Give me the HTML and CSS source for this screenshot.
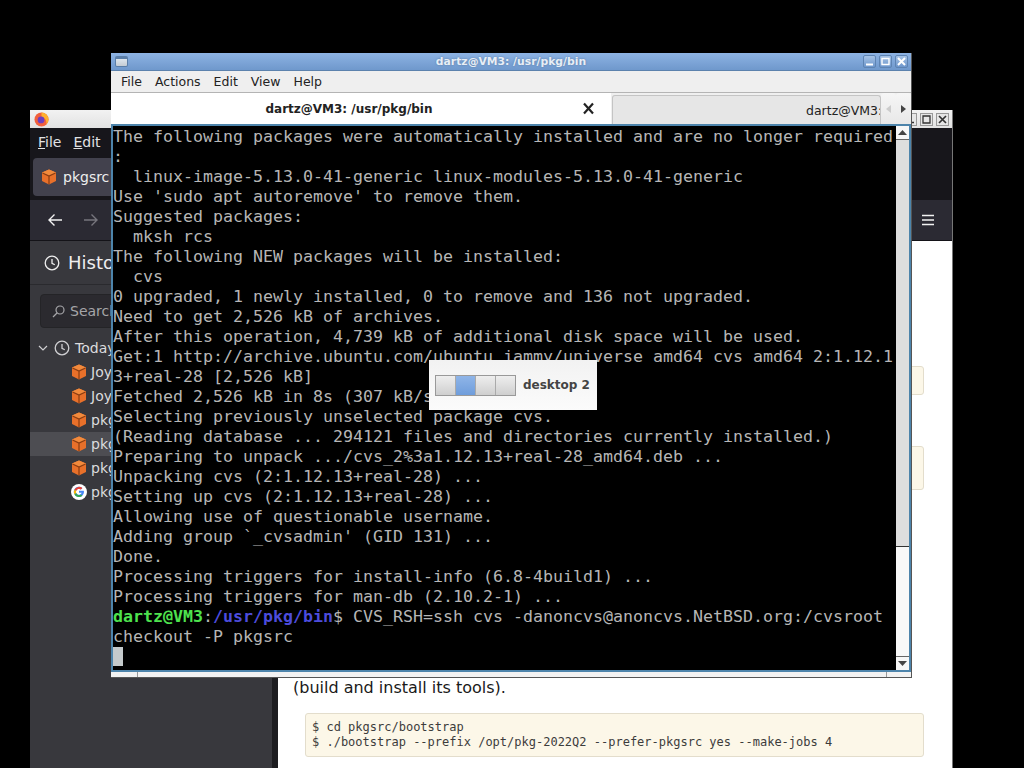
FILE: index.html
```html
<!DOCTYPE html>
<html lang="en">
<head>
<meta charset="utf-8">
<title>dartz@VM3: /usr/pkg/bin</title>
<link rel="stylesheet" href="styles.css">
</head>
<body>
<svg class="defs" width="0" height="0" aria-hidden="true">
  <symbol id="pkg" viewBox="0 0 16 16">
    <path d="M8 .5 15 3.5V12L8 15.5 1 12V3.5Z" fill="#e8702a"/>
    <path d="M8 .5 15 3.500 8 6.800 1 3.500Z" fill="#f28a3c"/>
    <path d="M1.500 4 8 7l6.500-3M8 7v8" fill="none" stroke="#8a3d12" stroke-width="1.200"/>
  </symbol>
  <symbol id="clock" viewBox="0 0 16 16">
    <circle cx="8" cy="8" r="6.800" fill="none" stroke="currentColor" stroke-width="1.300"/>
    <path d="M8 4v4.300l2.800 1.500" fill="none" stroke="currentColor" stroke-width="1.300"/>
  </symbol>
  <symbol id="goog" viewBox="0 0 16 16">
    <circle cx="8" cy="8" r="8" fill="#fff"/>
    <path d="M12.800 6.700H8v2h2.700A3 3 0 1 1 9.900 5.600l1.500-1.500A5.100 5.100 0 1 0 13 8z" fill="#4285f4"/>
    <path d="M3.500 5.600 5.200 6.900A3 3 0 0 1 9.900 5.600l1.500-1.500A5.100 5.100 0 0 0 3.500 5.600z" fill="#ea4335"/>
    <path d="M3.500 5.600a5.100 5.100 0 0 0 0 4.800L5.200 9.100a3 3 0 0 1 0-2.200z" fill="#fbbc05"/>
    <path d="M3.500 10.400A5.100 5.100 0 0 0 11.500 11.700L9.900 10.400A3 3 0 0 1 5.200 9.100z" fill="#34a853"/>
  </symbol>
</svg>

<main class="desktop">
  <section class="browser">
    <header class="b-title">
      <svg class="fx" width="15" height="15" viewBox="0 0 16 16" aria-hidden="true">
        <circle cx="8" cy="8" r="7.500" fill="#f2603c"/>
        <path d="M8 .5a7.500 7.500 0 0 1 7.500 7.500c0 2-1 4-2.500 5 1-3-1-7-5-8z" fill="#ffb02e"/>
        <circle cx="7.500" cy="8.500" r="3.600" fill="#6d3fc0"/>
      </svg>
      <div class="b-controls">
        <span class="b-btn"><svg width="9" height="9" viewBox="0 0 9 9"><path d="M1 7.500h7" stroke="#333" stroke-width="1.500"/></svg></span>
        <span class="b-btn"><svg width="9" height="9" viewBox="0 0 9 9"><path d="M1 1h7v7H1z" fill="none" stroke="#333" stroke-width="1.300"/></svg></span>
        <span class="b-btn"><svg width="9" height="9" viewBox="0 0 9 9"><path d="M1 1l7 7M8 1 1 8" stroke="#333" stroke-width="1.700"/></svg></span>
      </div>
    </header>
    <nav class="b-menu"><span><u>F</u>ile</span><span><u>E</u>dit</span></nav>
    <div class="b-tabs">
      <div class="b-tab"><svg width="16" height="16"><use href="#pkg"/></svg><span>pkgsrc</span></div>
    </div>
    <div class="b-nav">
      <svg class="nav-back" width="16" height="16" viewBox="0 0 16 16"><path d="M15 8H2M7.500 2.500 2 8l5.500 5.500" fill="none" stroke="#f2f2f2" stroke-width="1.400"/></svg>
      <svg class="nav-fwd" width="16" height="16" viewBox="0 0 16 16"><path d="M1 8h13M8.500 2.500 14 8l-5.500 5.500" fill="none" stroke="#77767d" stroke-width="1.400"/></svg>
      <svg class="nav-menu" width="14" height="12" viewBox="0 0 14 12"><path d="M1 1.500h12M1 6h12M1 10.500h12" stroke="#f2f2f2" stroke-width="1.300"/></svg>
    </div>
    <div class="b-body">
      <aside class="sidebar">
        <div class="side-head"><svg width="16" height="16"><use href="#clock"/></svg><span>History</span></div>
        <div class="side-search">
          <svg width="13" height="13" viewBox="0 0 13 13"><circle cx="8" cy="5" r="4" fill="none" stroke="#a5a5a8" stroke-width="1.200"/><path d="M5 8 1 12" stroke="#a5a5a8" stroke-width="1.200"/></svg>
          <span>Search history</span>
        </div>
        <ul class="tree">
          <li class="tree-day">
            <svg width="10" height="10" viewBox="0 0 10 10"><path d="M1 3l4 4 4-4" fill="none" stroke="#cfcfd2" stroke-width="1.200"/></svg>
            <svg class="day-clock" width="16" height="16"><use href="#clock"/></svg><span>Today</span>
          </li>
          <li class="tree-row"><svg width="16" height="16"><use href="#pkg"/></svg><span>Joyent</span></li>
          <li class="tree-row"><svg width="16" height="16"><use href="#pkg"/></svg><span>Joyent</span></li>
          <li class="tree-row"><svg width="16" height="16"><use href="#pkg"/></svg><span>pkgsrc</span></li>
          <li class="tree-row is-sel"><svg width="16" height="16"><use href="#pkg"/></svg><span>pkgsrc</span></li>
          <li class="tree-row"><svg width="16" height="16"><use href="#pkg"/></svg><span>pkgsrc</span></li>
          <li class="tree-row"><svg width="16" height="16"><use href="#goog"/></svg><span>pkgsrc</span></li>
        </ul>
      </aside>
      <div class="splitter"></div>
      <article class="page">
        <pre class="code code-a"> </pre>
        <pre class="code code-b"> 
 </pre>
        <p class="para">(build and install its tools).</p>
        <pre class="code code-c">$ cd pkgsrc/bootstrap
$ ./bootstrap --prefix /opt/pkg-2022Q2 --prefer-pkgsrc yes --make-jobs 4</pre>
      </article>
    </div>
  </section>

  <section class="term">
    <header class="t-title">
      <span class="t-winicon"></span>
      <span class="t-name">dartz@VM3: /usr/pkg/bin</span>
      <div class="t-controls">
        <span class="t-btn"><svg width="9" height="9" viewBox="0 0 9 9"><path d="M1 7.500h7" stroke="#fff" stroke-width="2"/></svg></span>
        <span class="t-btn"><svg width="9" height="9" viewBox="0 0 9 9"><path d="M1 1.500h7v6H1z" fill="none" stroke="#fff" stroke-width="1.400"/></svg></span>
        <span class="t-btn"><svg width="9" height="9" viewBox="0 0 9 9"><path d="M1 1l7 7M8 1 1 8" stroke="#fff" stroke-width="2"/></svg></span>
      </div>
    </header>
    <nav class="t-menu"><span>File</span><span>Actions</span><span>Edit</span><span>View</span><span>Help</span></nav>
    <div class="t-tabs">
      <div class="t-tab is-active">
        <span class="t-tab-label">dartz@VM3: /usr/pkg/bin</span>
        <svg class="t-tab-x" width="13" height="13" viewBox="0 0 13 13"><path d="M2 1.500 11 11.500M11 1.500 2 11.500" stroke="#222" stroke-width="2.200"/></svg>
      </div>
      <div class="t-tab is-back"><span>dartz@VM3:</span></div>
      <div class="t-scroll"><svg width="5" height="8" viewBox="0 0 5 8"><path d="M5 0v8L0 4z" fill="#ccc"/></svg></div>
      <div class="t-scroll"><svg width="5" height="8" viewBox="0 0 5 8"><path d="M0 0v8l5-4z" fill="#444"/></svg></div>
    </div>
    <div class="t-screen">
      <div class="t-text">
<pre class="t-block">The following packages were automatically installed and are no longer required
:
  linux-image-5.13.0-41-generic linux-modules-5.13.0-41-generic
Use 'sudo apt autoremove' to remove them.
Suggested packages:
  mksh rcs
The following NEW packages will be installed:
  cvs
0 upgraded, 1 newly installed, 0 to remove and 136 not upgraded.
Need to get 2,526 kB of archives.
After this operation, 4,739 kB of additional disk space will be used.
Get:1 http://archive.ubuntu.com/ubuntu jammy/universe amd64 cvs amd64 2:1.12.1
3+real-28 [2,526 kB]
Fetched 2,526 kB in 8s (307 kB/s)
Selecting previously unselected package cvs.
(Reading database ... 294121 files and directories currently installed.)
Preparing to unpack .../cvs_2%3a1.12.13+real-28_amd64.deb ...
Unpacking cvs (2:1.12.13+real-28) ...
Setting up cvs (2:1.12.13+real-28) ...
Allowing use of questionable username.
Adding group `_cvsadmin' (GID 131) ...
Done.
Processing triggers for install-info (6.8-4build1) ...
Processing triggers for man-db (2.10.2-1) ...</pre>
        <div class="t-prompt"><span class="p-user">dartz@VM3</span><span>:</span><span class="p-path">/usr/pkg/bin</span><span>$ CVS_RSH=ssh cvs -danoncvs@anoncvs.NetBSD.org:/cvsroot</span></div>
        <pre class="t-block">checkout -P pkgsrc</pre>
        <div class="cursor"></div>
      </div>
      <div class="t-sb">
        <div class="sb-btn"><svg width="9" height="5" viewBox="0 0 9 5"><path d="M0 5h9L4.500 0z" fill="#444"/></svg></div>
        <div class="sb-thumb"></div>
        <div class="sb-rest"></div>
        <div class="sb-btn sb-down"><svg width="9" height="5" viewBox="0 0 9 5"><path d="M0 0h9L4.500 5z" fill="#444"/></svg></div>
      </div>
    </div>
    <div class="t-grip"><i></i><i></i></div>
  </section>

  <aside class="osd">
    <div class="pager"><i></i><i class="is-on"></i><i></i><i></i></div>
    <span>desktop 2</span>
  </aside>
</main>
</body>
</html>
```
FILE: styles.css
```css
* { box-sizing: border-box; }
html, body { margin: 0; height: 100%; background: #000; overflow: hidden; }
.defs { position: absolute; }
.desktop { position: relative; width: 1024px; height: 768px; overflow: hidden; background: #000; font-family: "DejaVu Sans", sans-serif; }

/* browser window */
.browser { position: absolute; left: 30px; top: 110px; width: 923px; height: 658px; display: flex; flex-direction: column; background: #2b2a33; border-right: 1px solid #777; }
.b-title { height: 18px; flex: none; display: flex; align-items: center; justify-content: space-between; background: linear-gradient(#f2f2f2, #e2e2e2); padding: 0 3px 0 4px; }
.b-controls { display: flex; gap: 3px; }
.b-btn { width: 13px; height: 13px; display: flex; align-items: center; justify-content: center; border: 1px solid #999; background: #e6e6e6; }
.b-menu { height: 28px; flex: none; display: flex; align-items: center; gap: 12px; padding-left: 8px; background: #17161b; color: #e2e2e4; font-size: 14px; }
.b-tabs { height: 44px; flex: none; padding: 2px 0 4px 3px; background: #17161b; }
.b-tab { width: 200px; height: 38px; display: flex; align-items: center; gap: 6px; padding-left: 8px; background: #42414d; border-radius: 4px; color: #eee; font-size: 14px; }
.b-nav { height: 40px; flex: none; position: relative; display: flex; align-items: center; padding-left: 17px; gap: 20px; background: #2b2a33; }
.nav-menu { position: absolute; right: 17px; top: 14px; }
.b-body { flex: 1; min-height: 0; display: flex; border-top: 1px solid #141318; }
.sidebar { width: 242px; flex: none; background: #38383d; color: #dcdcde; overflow: hidden; }
.side-head { height: 44px; display: flex; align-items: center; gap: 8px; padding-left: 14px; border-bottom: 1px solid #2a2a2e; font-size: 18px; color: #eee; }
.side-search { height: 34px; margin: 9px 10px 0; display: flex; align-items: center; gap: 5px; padding-left: 11px; background: #2b2a2f; border: 1px solid #242427; border-radius: 4px; color: #a5a5a8; font-size: 14px; }
.tree { list-style: none; margin: 8px 0 0; padding: 0; font-size: 14px; }
.tree li { height: 24px; display: flex; align-items: center; white-space: nowrap; }
.tree-day { padding-left: 8px; }
.day-clock { margin: 0 5px 0 6px; color: #cfcfd2; }
.tree-row { padding-left: 41px; gap: 4px; }
.is-sel { background: #4d4d52; }
.splitter { width: 6px; flex: none; background: #1d1d20; }
.page { flex: 1; min-width: 0; background: #fff; padding: 125px 28px 0 15px; overflow: hidden; }
.code { margin: 0 0 0 12px; padding: 6px; background: #fcf7e8; border: 1px solid #e3ddcc; border-radius: 3px; color: #3c3c3c; font: 12px/15px "DejaVu Sans Mono", monospace; }
.code-b { margin-top: 51px; }
.para { margin: 185px 0 0; height: 26px; color: #1a1a1a; font-size: 16px; line-height: 26px; }
.code-c { margin-top: 12px; }

/* terminal window */
.term { position: absolute; left: 111px; top: 53px; width: 801px; height: 625px; display: flex; flex-direction: column; background: #f0f0f0; border-right: 1px solid #555; border-bottom: 1px solid #555; }
.t-title { height: 18px; flex: none; position: relative; display: flex; align-items: center; justify-content: center; background: linear-gradient(#8db3e3, #6f98cc); border-bottom: 1px solid #5c82ad; }
.t-winicon { position: absolute; left: 4px; top: 3px; width: 13px; height: 11px; border: 1px solid #5a7ea8; border-top-width: 3px; border-radius: 2px; background: linear-gradient(#dde6ee, #c4ccd4); }
.t-name { color: #e8eef6; font-size: 10.800px; font-weight: 700; text-shadow: 0 0 2px #54789f; }
.t-controls { position: absolute; right: 3px; top: 2px; display: flex; gap: 3px; }
.t-btn { width: 13px; height: 13px; display: flex; align-items: center; justify-content: center; background: linear-gradient(#a6c3e6, #6d96cb); border: 1px solid #5e84b3; border-radius: 2px; }
.t-menu { height: 22px; flex: none; display: flex; align-items: center; gap: 13px; padding-left: 10px; background: #efefef; border-bottom: 1px solid #b4b4b4; color: #222; font-size: 12.500px; }
.t-tabs { height: 31px; flex: none; display: flex; background: #efefef; }
.t-tab { position: relative; height: 31px; display: flex; align-items: center; font-size: 12.500px; color: #222; overflow: hidden; white-space: nowrap; }
.is-active { width: 500px; justify-content: center; padding-right: 24px; background: #fff; font-size: 12px; font-weight: 700; }
.t-tab-x { position: absolute; left: 471px; top: 9px; }
.is-back { width: 269px; margin: 2px 0 0 1px; height: 29px; padding-left: 193px; background: #e6e6e6; border: 1px solid #c4c4c4; border-bottom: 0; border-radius: 3px 3px 0 0; }
.t-scroll { width: 15px; height: 31px; display: flex; align-items: center; justify-content: center; background: linear-gradient(#f6f6f6, #e8e8e8); border-radius: 3px 3px 0 0; }
.t-screen { height: 548px; flex: none; display: flex; justify-content: space-between; background: #000; border: 2px solid #4d84ab; }
.t-text { color: #b6b6b6; font: 16.610px/20px "DejaVu Sans Mono", monospace; }
.t-block { margin: 0; font: inherit; white-space: pre; position: relative; top: 1px; }
.t-prompt { display: flex; white-space: pre; position: relative; top: 1px; }
.p-user { color: #4ee34e; font-weight: 700; }
.p-path { color: #4c4cdc; font-weight: 700; }
.cursor { width: 10px; height: 19px; margin-top: 1px; background: #c4cacc; }
.t-sb { width: 13px; flex: none; display: flex; flex-direction: column; background: #f4f4f4; }
.sb-btn { height: 14px; flex: none; display: flex; align-items: center; justify-content: center; background: #f7f7f7; border-bottom: 1px solid #666; }
.sb-down { border-top: 1px solid #666; border-bottom: 0; }
.sb-thumb { height: 407px; flex: none; background: #dedede; border-bottom: 1px solid #333; }
.sb-rest { flex: 1; background: #f8f8f8; }
.t-grip { flex: 1; display: flex; justify-content: space-between; padding: 0 24px 0 26px; background: #f2f2f2; }
.t-grip i { width: 1px; background: #999; }

/* desktop switch popup */
.osd { position: absolute; left: 429px; top: 360px; width: 168px; height: 50px; display: flex; align-items: center; gap: 7px; padding-left: 6px; background: linear-gradient(#f2f2f2, #fbfbfb); color: #444; font-size: 12px; font-weight: 700; }
.pager { display: flex; width: 81px; height: 21px; border: 1px solid #999; }
.pager i { flex: 1; background: linear-gradient(#eee, #cfcfcf); border-right: 1px solid #aaa; }
.pager i:last-child { border-right: 0; }
.pager .is-on { background: linear-gradient(#8fb5e8, #6f9ddb); }
```
